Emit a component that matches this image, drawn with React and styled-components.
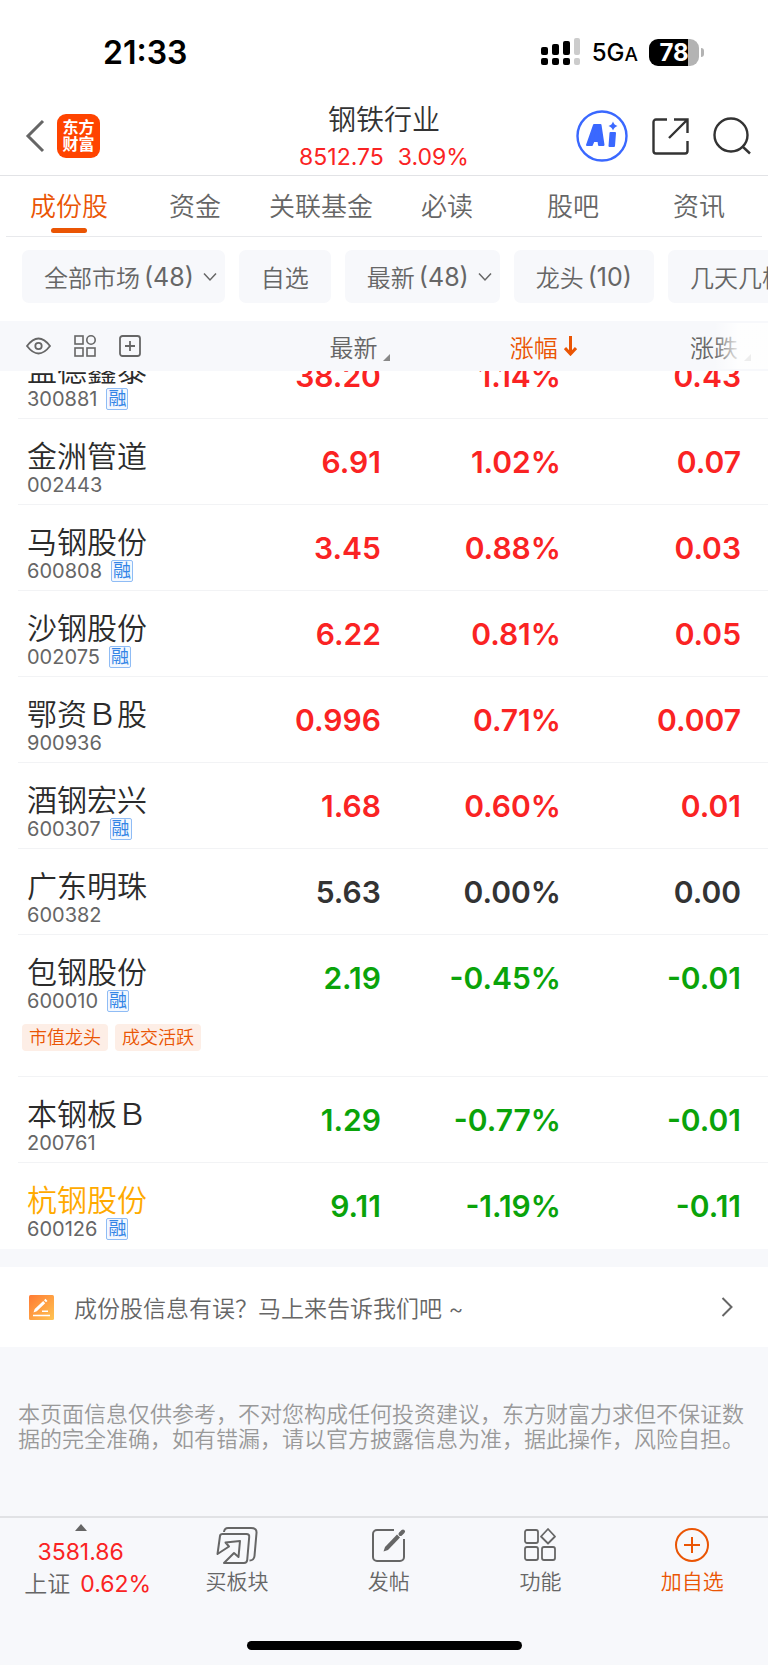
import { useState } from "react";
import styled, { createGlobalStyle } from "styled-components";

const GlobalStyle = createGlobalStyle`
  * {
    box-sizing: border-box;
  }
  body {
    margin: 0;
    background: #f7f8fb;
    color: #333;
    font-family: Inter, "Noto Sans CJK SC", sans-serif;
    font-weight: 350;
  }
  button {
    margin: 0;
    padding: 0;
    border: 0;
    background: none;
    color: inherit;
    font: inherit;
    cursor: pointer;
  }
  a {
    color: inherit;
    text-decoration: none;
  }
  svg {
    display: block;
    flex: none;
  }
`;

const colors = {
  up: "#fa2323",
  down: "#0aa30a",
  flat: "#333",
  orange: "#ea5504",
  gray: "#666",
  panel: "#f7f8fb",
};

const Page = styled.div`
  background: #fff;
`;

const StatusBar = styled.div`
  display: flex;
  justify-content: space-between;
  align-items: center;
  height: 99px;
  padding: 5px 64px 0 103px;
  color: #000;
`;

const Clock = styled.time`
  font-size: 32px;
  font-weight: 600;
`;

const StatusIcons = styled.div`
  display: flex;
  align-items: center;
  gap: 11px;
`;

const Network = styled.span`
  font-size: 24px;
  font-weight: 500;
  small {
    font-size: 19px;
  }
`;

const Battery = styled.div`
  display: flex;
  align-items: center;
  gap: 2px;
`;

const BatteryBody = styled.div`
  width: 50px;
  border-radius: 9px;
  background: linear-gradient(to right, #000 78%, #b3b3b3 78%);
  color: #fff;
  font-size: 24px;
  font-weight: 700;
  line-height: 27px;
  text-align: center;
`;

const BatteryCap = styled.div`
  width: 3px;
  height: 9px;
  border-radius: 0 3px 3px 0;
  background: #b3b3b3;
`;

const Header = styled.header`
  display: grid;
  grid-template-columns: 1fr auto 1fr;
  align-items: center;
  height: 77px;
  padding: 0 17px 2px;
  border-bottom: 1px solid #e2e3e6;
`;

const HeaderSide = styled.div`
  display: flex;
  align-items: center;
  gap: ${(props) => props.$gap}px;
  justify-content: ${(props) => (props.$end ? "flex-end" : "flex-start")};
  padding-left: 8px;
`;

const Logo = styled.a`
  width: 43px;
  padding: 5px 0;
  border-radius: 9px;
  background: #ff4400;
  color: #fff;
  font-size: 16px;
  font-weight: 700;
  line-height: 17px;
  text-align: center;
`;

const Title = styled.div`
  text-align: center;
  h1 {
    margin: 0;
    font-size: 28px;
    font-weight: inherit;
    line-height: 42px;
  }
  p {
    display: flex;
    justify-content: center;
    gap: 14px;
    margin: 0;
    color: ${colors.up};
    font-size: 23px;
    font-weight: 400;
    line-height: 32px;
  }
`;

const Tabs = styled.nav`
  display: flex;
  height: 61px;
  margin: 0 6px;
  border-bottom: 1px solid #e8e9ec;
`;

const Tab = styled.button`
  display: flex;
  flex: 1;
  flex-direction: column;
  align-items: center;
  color: ${(props) => (props.$active ? colors.orange : colors.gray)};
  font-size: 26px;
  line-height: 38px;
  padding-top: 12px;
  &::after {
    content: "";
    width: 36px;
    height: 5px;
    margin-top: 2px;
    border-radius: 3px;
    background: ${(props) => (props.$active ? colors.orange : "none")};
  }
`;

const Filters = styled.div`
  display: flex;
  gap: 14px;
  padding: 13px 0 18px 22px;
  overflow: hidden;
`;

const Chip = styled.button`
  display: flex;
  flex: none;
  align-items: center;
  gap: 4px;
  height: 53px;
  padding: 0 ${(props) => (props.$menu ? 8 : 22)}px 0 22px;
  border-radius: 7px;
  background: ${colors.panel};
  color: ${colors.gray};
  font-size: 24px;
  span {
    font-size: 25px;
    font-weight: 400;
  }
  svg {
    margin-left: 5px;
  }
`;

const Table = styled.table`
  display: block;
  width: 100%;
`;

const Head = styled.thead`
  display: block;
  position: relative;
  background: ${colors.panel};
  &::after {
    content: "";
    position: absolute;
    inset: 2px 0 2px auto;
    width: 54px;
    background: linear-gradient(to right, rgba(255, 255, 255, 0), #fff 45%);
    opacity: 0.85;
    pointer-events: none;
  }
`;

const Body = styled.tbody`
  display: block;
  overflow: hidden;
  > tr:first-child {
    margin-top: -38px;
  }
`;

const HeadRow = styled.tr`
  display: flex;
  align-items: center;
  height: 50px;
  margin-left: 18px;
  padding-left: 8px;
`;

const HeadTools = styled.th`
  display: flex;
  flex: 1;
  gap: 23px;
  padding: 0;
  color: ${colors.gray};
`;

const HeadCell = styled.th`
  width: 24.3%;
  padding: 0 ${(props) => (props.$active ? 11 : 17)}px 0 0;
  color: ${(props) => (props.$active ? colors.orange : colors.gray)};
  font-size: 24px;
  font-weight: inherit;
  button {
    display: flex;
    align-items: center;
    gap: 6px;
    margin-left: auto;
  }
  svg.corner {
    align-self: flex-end;
    margin-bottom: 3px;
  }
`;

const Row = styled.tr`
  display: flex;
  min-height: 86px;
  margin-left: 18px;
  padding-left: 9px;
  border-bottom: 1px solid ${(props) => (props.$last ? "#fff" : "#f2f3f5")};
`;

const NameCell = styled.td`
  flex: 1;
  padding: 19px 0 0;
  white-space: nowrap;
`;

const Name = styled.div`
  color: ${(props) => (props.$marked ? "#ffaa00" : "#2b2b2b")};
  font-size: 30px;
  line-height: 36px;
`;

const Code = styled.div`
  display: flex;
  align-items: center;
  gap: 9px;
  color: ${colors.gray};
  font-size: 20px;
  font-weight: 400;
  line-height: 22px;
`;

const Margin = styled.span`
  width: 22px;
  border: 1px solid #8fbcf5;
  border-radius: 2px;
  background: #f3f8ff;
  color: #3385e6;
  font-size: 18px;
  line-height: 20px;
  text-align: center;
`;

const Tags = styled.div`
  display: flex;
  gap: 7px;
  margin: 12px 0 25px -5px;
`;

const Tag = styled.span`
  padding: 0 7px;
  border-radius: 4px;
  background: #fdeee6;
  color: ${colors.orange};
  font-size: 18px;
  line-height: 27px;
`;

const Value = styled.td`
  width: 24.3%;
  padding: 25px 27px 0 0;
  color: ${(props) => colors[props.$trend]};
  font-size: 30px;
  font-weight: 600;
  line-height: 36px;
  text-align: right;
`;

const Feedback = styled.a`
  display: flex;
  align-items: center;
  gap: 20px;
  height: 98px;
  padding: 0 35px 0 29px;
  border-top: 18px solid ${colors.panel};
  color: ${colors.gray};
  font-size: 23px;
  span {
    flex: 1;
  }
`;

const Notice = styled.p`
  margin: 0;
  padding: 55px 20px 64px 18px;
  background: ${colors.panel};
  color: #999;
  font-size: 22px;
  line-height: 25px;
`;

const Footer = styled.footer`
  border-top: 2px solid #e1e2e5;
  background: ${colors.panel};
`;

const Actions = styled.div`
  display: flex;
  height: 123px;
`;

const Index = styled.button`
  display: flex;
  flex-direction: column;
  align-items: center;
  width: 21%;
  padding-top: 6px;
  color: ${colors.up};
  font-size: 23px;
  font-weight: 400;
  line-height: 32px;
  svg {
    margin-bottom: 5px;
  }
  div {
    display: flex;
    gap: 10px;
    margin-left: 14px;
  }
  em {
    color: ${colors.gray};
    font-style: normal;
    font-weight: 350;
  }
`;

const Action = styled.button`
  display: flex;
  flex: 1;
  flex-direction: column;
  align-items: center;
  gap: 1px;
  padding-top: 8px;
  color: ${(props) => (props.$accent ? colors.orange : colors.gray)};
  font-size: 21px;
  line-height: 30px;
`;

const HomeBar = styled.div`
  width: 275px;
  height: 9px;
  margin: 0 auto 15px;
  border-radius: 5px;
  background: #000;
`;

const Line = ({ w, h, stroke = 2, children, ...rest }) => (
  <svg
    width={w}
    height={h}
    viewBox={`0 0 ${w} ${h}`}
    fill="none"
    stroke="currentColor"
    strokeWidth={stroke}
    aria-hidden="true"
    {...rest}
  >
    {children}
  </svg>
);

const ChevronDown = () => (
  <Line w={14} h={10} stroke={1.5}>
    <path d="M1 1.5l6 6.5 6-6.5" />
  </Line>
);

const Corner = () => (
  <Line w={7} h={7} stroke={0} className="corner">
    <path d="M7 0v7H0z" fill="#888" />
  </Line>
);

const Signal = () => (
  <svg width="40" height="28" aria-hidden="true">
    <rect x="0" y="9" width="7" height="8" rx="2" />
    <rect x="11" y="6" width="7" height="11" rx="2" />
    <rect x="22" y="3" width="7" height="14" rx="2" />
    <rect x="33" y="0" width="6" height="17" rx="2" fill="#ccc" />
    <rect x="0" y="20" width="7" height="7" rx="2" />
    <rect x="11" y="20" width="7" height="7" rx="2" />
    <rect x="22" y="20" width="7" height="7" rx="2" />
    <rect x="33" y="20" width="6" height="7" rx="2" fill="#ccc" />
  </svg>
);

const AiIcon = () => (
  <svg width="52" height="52" viewBox="0 0 52 52" aria-hidden="true">
    <circle cx="26" cy="26" r="24.5" fill="#fff" stroke="#3a68ff" strokeWidth="2.4" />
    <g fill="#3a68ff" stroke="#3a68ff" strokeWidth="2" strokeLinejoin="round">
      <path
        fillRule="evenodd"
        d="M18 15h6.500l3 20h-4.500l-.5-4h-5l-1.700 4H11zM19 26.500h2.800l-.4-5z"
      />
      <path d="M34.500 23h4.500l-1 13h-4.500z" />
    </g>
    <path fill="#3a68ff" d="M37 11.500q1 3.500 4.500 4.500-3.500 1-4.500 4.500-1-3.500-4.500-4.500 3.500-1 4.500-4.500z" />
  </svg>
);

const tabs = ["成份股", "资金", "关联基金", "必读", "股吧", "资讯"];

const filters = [
  { label: "全部市场", count: "(48)", menu: true },
  { label: "自选" },
  { label: "最新", count: "(48)", menu: true },
  { label: "龙头", count: "(10)" },
  { label: "几天几板" },
];

const stocks = [
  { name: "盖德鑫泰", code: "300881", margin: true, values: ["38.20", "1.14%", "0.43"], trend: "up" },
  { name: "金洲管道", code: "002443", values: ["6.91", "1.02%", "0.07"], trend: "up" },
  { name: "马钢股份", code: "600808", margin: true, values: ["3.45", "0.88%", "0.03"], trend: "up" },
  { name: "沙钢股份", code: "002075", margin: true, values: ["6.22", "0.81%", "0.05"], trend: "up" },
  { name: "鄂资Ｂ股", code: "900936", values: ["0.996", "0.71%", "0.007"], trend: "up" },
  { name: "酒钢宏兴", code: "600307", margin: true, values: ["1.68", "0.60%", "0.01"], trend: "up" },
  { name: "广东明珠", code: "600382", values: ["5.63", "0.00%", "0.00"], trend: "flat" },
  {
    name: "包钢股份",
    code: "600010",
    margin: true,
    values: ["2.19", "-0.45%", "-0.01"],
    trend: "down",
    tags: ["市值龙头", "成交活跃"],
  },
  { name: "本钢板Ｂ", code: "200761", values: ["1.29", "-0.77%", "-0.01"], trend: "down" },
  {
    name: "杭钢股份",
    code: "600126",
    margin: true,
    marked: true,
    values: ["9.11", "-1.19%", "-0.11"],
    trend: "down",
  },
];

const StockRow = ({ stock, last }) => (
  <Row $last={last}>
    <NameCell>
      <Name $marked={stock.marked}>{stock.name}</Name>
      <Code>
        {stock.code}
        {stock.margin && <Margin>融</Margin>}
      </Code>
      {stock.tags && (
        <Tags>
          {stock.tags.map((tag) => (
            <Tag key={tag}>{tag}</Tag>
          ))}
        </Tags>
      )}
    </NameCell>
    {stock.values.map((value, i) => (
      <Value key={i} $trend={stock.trend}>
        {value}
      </Value>
    ))}
  </Row>
);

const App = () => {
  const [tab, setTab] = useState("成份股");

  return (
    <Page>
      <GlobalStyle />
      <StatusBar>
        <Clock>21:33</Clock>
        <StatusIcons>
          <Signal />
          <Network>
            5G<small>A</small>
          </Network>
          <Battery>
            <BatteryBody>78</BatteryBody>
            <BatteryCap />
          </Battery>
        </StatusIcons>
      </StatusBar>

      <Header>
        <HeaderSide $gap={12}>
          <button aria-label="返回">
            <Line w={20} h={34} stroke={3} color={colors.gray}>
              <path d="M18 2L3 17l15 15" />
            </Line>
          </button>
          <Logo href="#home">
            东方
            <br />
            财富
          </Logo>
        </HeaderSide>
        <Title>
          <h1>钢铁行业</h1>
          <p>
            <span>8512.75</span>
            <span>3.09%</span>
          </p>
        </Title>
        <HeaderSide $gap={24} $end>
          <button aria-label="AI">
            <AiIcon />
          </button>
          <button aria-label="分享">
            <Line w={37} h={37} stroke={2.4}>
              <path d="M15 1.500H4a2.500 2.500 0 0 0-2.500 2.500v29a2.500 2.500 0 0 0 2.500 2.500h29a2.500 2.500 0 0 0 2.500-2.500V23M22 1.500h13.500V15M35 2L17 20" />
            </Line>
          </button>
          <button aria-label="搜索">
            <Line w={38} h={38} stroke={2.4}>
              <circle cx="18" cy="18" r="16.500" />
              <path d="M29.500 29.500l7.500 7" />
            </Line>
          </button>
        </HeaderSide>
      </Header>

      <Tabs>
        {tabs.map((item) => (
          <Tab key={item} $active={item === tab} onClick={() => setTab(item)}>
            {item}
          </Tab>
        ))}
      </Tabs>

      <Filters>
        {filters.map((filter) => (
          <Chip key={filter.label} $menu={filter.menu}>
            {filter.label}
            {filter.count && <span>{filter.count}</span>}
            {filter.menu && <ChevronDown />}
          </Chip>
        ))}
      </Filters>

      <Table>
        <Head>
          <HeadRow>
            <HeadTools>
              <button aria-label="显示">
                <Line w={25} h={22} stroke={1.8}>
                  <path d="M1 11q11.500-15 23 0-11.500 15-23 0z" />
                  <circle cx="12.500" cy="11" r="3.200" />
                </Line>
              </button>
              <button aria-label="布局">
                <Line w={22} h={22} stroke={1.6}>
                  <rect x="1" y="1" width="8" height="8" />
                  <circle cx="17" cy="5" r="4.200" />
                  <rect x="1" y="13" width="8" height="8" />
                  <rect x="13" y="13" width="8" height="8" />
                </Line>
              </button>
              <button aria-label="添加">
                <Line w={22} h={22} stroke={1.8}>
                  <rect x="1" y="1" width="20" height="20" rx="2.500" />
                  <path d="M11 6v10M6 11h10" />
                </Line>
              </button>
            </HeadTools>
            <HeadCell>
              <button>
                最新
                <Corner />
              </button>
            </HeadCell>
            <HeadCell $active>
              <button>
                涨幅
                <Line w={13} h={20} stroke={3}>
                  <path d="M6.500 0v18M1 12l5.500 6 5.500-6" />
                </Line>
              </button>
            </HeadCell>
            <HeadCell>
              <button>
                涨跌
                <Corner />
              </button>
            </HeadCell>
          </HeadRow>
        </Head>
        <Body>
          {stocks.map((stock, i) => (
            <StockRow key={stock.code} stock={stock} last={i === stocks.length - 1} />
          ))}
        </Body>
      </Table>

      <Feedback href="#feedback">
        <svg width="25" height="25" viewBox="0 0 25 25" aria-hidden="true">
          <defs>
            <linearGradient id="note" x1="0" y1="0" x2="1" y2="1">
              <stop offset="0" stopColor="#ff7a33" />
              <stop offset="1" stopColor="#ffc552" />
            </linearGradient>
          </defs>
          <rect width="25" height="25" rx="1.500" fill="url(#note)" />
          <path d="M4.500 17.500l1.200-3.500 8.500-8 2 2.200-8.400 8zM15 5.200l1.500-1.400 2 2.200-1.500 1.300z" fill="#fff" />
          <path d="M13 16.200h6M4 20.500h17" stroke="#fff" strokeWidth="1.500" />
        </svg>
        <span>成份股信息有误？马上来告诉我们吧 ~</span>
        <Line w={12} h={20}>
          <path d="M1.500 1l9 9-9 9" />
        </Line>
      </Feedback>

      <Notice>
        本页面信息仅供参考，不对您构成任何投资建议，东方财富力求但不保证数据的完全准确，如有错漏，请以官方披露信息为准，据此操作，风险自担。
      </Notice>

      <Footer>
        <Actions>
          <Index>
            <Line w={12} h={7} stroke={0}>
              <path d="M0 7l6-7 6 7z" fill="#666" />
            </Line>
            <span>3581.86</span>
            <div>
              <em>上证</em>
              <span>0.62%</span>
            </div>
          </Index>
          <Action>
            <Line w={42} h={40} strokeLinejoin="round">
              <path d="M8 6q.5-4 4-4h23q6 0 5.500 5l-2 23q-.5 4.500-5 4.500" />
              <path d="M1.500 28L4 10q.3-2 2.500-2h24q3 0 2.700 3l-2 23q-.3 3-3.200 3H8l10-10 4.500 4 1.500-16-14.500 1.500 3.500 4z" />
            </Line>
            买板块
          </Action>
          <Action>
            <Line w={34} h={40}>
              <path d="M22 4H5a4 4 0 0 0-4 4v23a4 4 0 0 0 4 4h23a4 4 0 0 0 4-4V13" />
              <path d="M11.500 25.500l1.500-4.500L25 8.500l3 3L16 24z" fill="currentColor" stroke="none" />
              <path d="M28.500 8l2.500-2.500" strokeWidth="4" strokeLinecap="round" />
            </Line>
            发帖
          </Action>
          <Action>
            <Line w={32} h={40} stroke={1.8}>
              <rect x="1" y="4" width="13" height="13" rx="2" />
              <path d="M24 3l7 7.500-7 7-7-7z" strokeLinejoin="round" />
              <rect x="1" y="21" width="13" height="13" rx="2" />
              <rect x="18" y="21" width="13" height="13" rx="2" />
            </Line>
            功能
          </Action>
          <Action $accent>
            <Line w={36} h={40}>
              <circle cx="18" cy="19" r="16" />
              <path d="M18 11v16M10 19h16" />
            </Line>
            加自选
          </Action>
        </Actions>
        <HomeBar />
      </Footer>
    </Page>
  );
};

export default App;
